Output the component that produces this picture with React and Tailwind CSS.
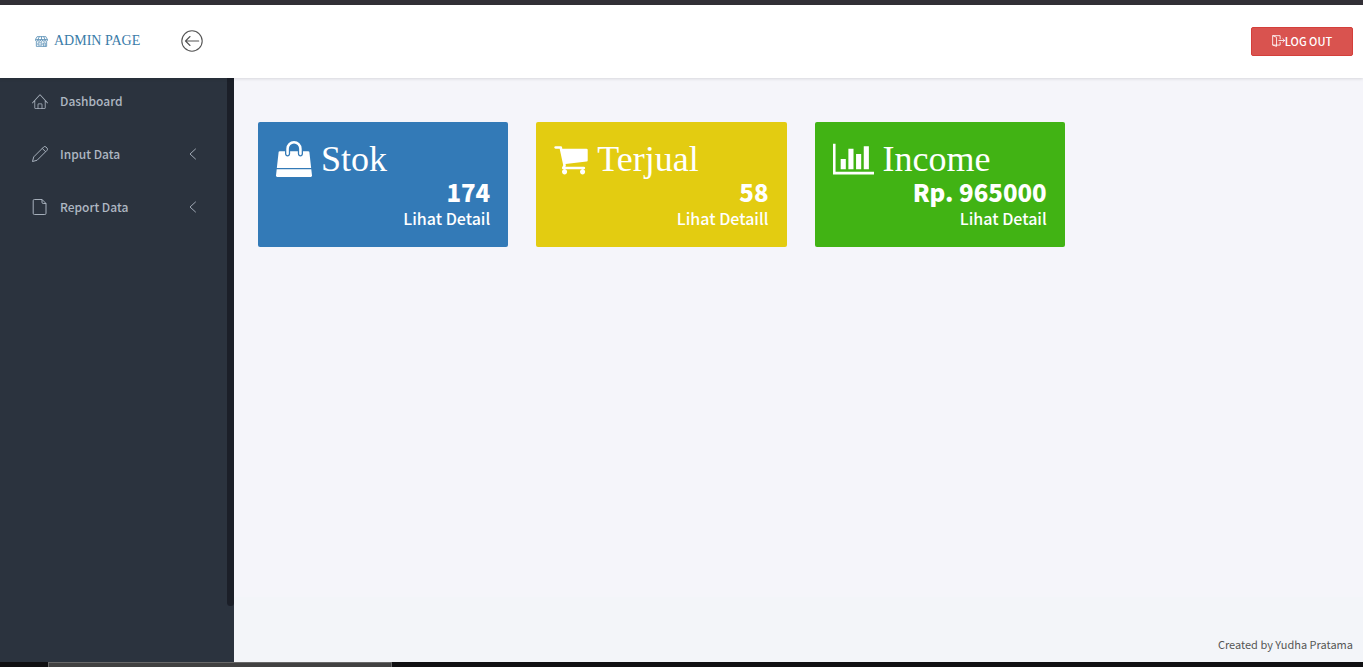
import React from "react";

function HomeIcon() {
  return (
    <svg viewBox="0 0 20 20" fill="currentColor" className="size-4" aria-hidden="true">
      <path d="M19.871 12.165l-8.829-9.758c-0.274-0.303-0.644-0.47-1.042-0.47-0.397 0-0.767 0.167-1.042 0.47l-8.829 9.758c-0.185 0.205-0.169 0.521 0.035 0.706 0.096 0.087 0.216 0.129 0.335 0.129 0.136 0 0.272-0.055 0.371-0.165l2.129-2.353v8.018c0 0.827 0.673 1.5 1.5 1.5h11c0.827 0 1.5-0.673 1.5-1.5v-8.018l2.129 2.353c0.185 0.205 0.501 0.221 0.706 0.035s0.221-0.501 0.035-0.706zM12 19h-4v-4.5c0-0.276 0.224-0.5 0.5-0.5h3c0.276 0 0.5 0.224 0.5 0.5v4.5zM16 18.5c0 0.276-0.224 0.5-0.5 0.5h-2.5v-4.5c0-0.827-0.673-1.5-1.5-1.5h-3c-0.827 0-1.5 0.673-1.5 1.5v4.5h-2.5c-0.276 0-0.5-0.224-0.5-0.5v-9.123l5.7-6.3c0.082-0.091 0.189-0.141 0.3-0.141s0.218 0.05 0.3 0.141l5.7 6.3v9.123z" />
    </svg>
  );
}

function PencilIcon() {
  return (
    <svg viewBox="0 0 20 20" fill="none" stroke="currentColor" strokeWidth="1.200" strokeLinejoin="round" className="size-4" aria-hidden="true">
      <path d="M.6 19.400 2.200 13.600 14.600 1.200a2 2 0 0 1 2.800 0l1.400 1.400a2 2 0 0 1 0 2.800L6.400 17.800zM12.800 3l4.200 4.200" />
    </svg>
  );
}

function FileIcon() {
  return (
    <svg viewBox="0 0 20 20" fill="none" stroke="currentColor" strokeWidth="1.200" strokeLinejoin="round" className="size-4" aria-hidden="true">
      <path d="M3 .6h9.500l5 5v12.300a1.500 1.500 0 0 1-1.500 1.500h-13a1.500 1.500 0 0 1-1.500-1.500V2.100a1.500 1.500 0 0 1 1.500-1.500zM12.500 .6V4.100a1.500 1.500 0 0 0 1.500 1.500h3.500" />
    </svg>
  );
}

function ChevronIcon() {
  return (
    <svg viewBox="0 0 12 12" fill="none" stroke="currentColor" strokeLinecap="round" strokeLinejoin="round" strokeWidth=".9" className="size-3" aria-hidden="true">
      <path d="M8.500 1 3 6l5.500 5" />
    </svg>
  );
}

function StoreIcon() {
  return (
    <svg viewBox="0 0 24 20" fill="none" stroke="currentColor" strokeWidth="1.300" strokeLinejoin="round" className="h-[11px] w-[13px]" aria-hidden="true">
      <path d="M4 1h16l3 5.500v1.500c0 2.200-4.400 2.200-4.400 0 0 2.200-4.400 2.200-4.400 0 0 2.200-4.400 2.200-4.400 0 0 2.200-4.400 2.200-4.400 0 0 2.200-4.400 2.200-4.400 0l-.4-1.500zM1 6.500h22M8 1 5.400 6.500V8M12 1v5.500M16 1l2.600 5.500V8M9.800 6.500V8M14.200 6.500V8M2.500 10.500v8.500h19v-8.500M5.500 12.500h7.500v4h-7.500zM16 19v-6.500h3V19" />
    </svg>
  );
}

function ArrowCircleIcon() {
  return (
    <svg viewBox="0 0 22 22" fill="none" stroke="currentColor" strokeWidth="1.100" strokeLinecap="round" strokeLinejoin="round" className="size-[22px]" aria-hidden="true">
      <circle cx="11" cy="11" r="10.200" />
      <path d="M17.700 11H4.500M9 6.500 4.500 11 9 15.500" />
    </svg>
  );
}

function ExitIcon() {
  return (
    <svg viewBox="0 0 20 18" fill="none" stroke="currentColor" strokeWidth="1.300" strokeLinecap="round" strokeLinejoin="round" className="h-3 w-[13px]" aria-hidden="true">
      <path d="M12.500 5.500V.8H1v14.500h5M12.500 11v4.300H7M1.500 .8 7 3.300v14l-5.500-2M10.500 8.200h9M16.700 5.400l2.800 2.800-2.800 2.800" />
    </svg>
  );
}

function BagIcon() {
  return (
    <svg viewBox="0 0 1792 1792" fill="currentColor" className="size-9" aria-hidden="true">
      <path d="M1757 1408l35 313q3 28-16 50-19 21-48 21h-1664q-29 0-48-21-19-22-16-50l35-313h1722zm-93-839l86 775h-1708l86-775q3-24 21-40.5t43-16.5h256v128q0 53 37.500 90.500t90.500 37.500 90.500-37.500 37.500-90.500v-128h384v128q0 53 37.500 90.500t90.500 37.500 90.500-37.500 37.500-90.500v-128h256q25 0 43 16.500t21 40.500zm-384-185v256q0 26-19 45t-45 19-45-19-19-45v-256q0-106-75-181t-181-75-181 75-75 181v256q0 26-19 45t-45 19-45-19-19-45v-256q0-159 112.500-271.500t271.500-112.500 271.500 112.500 112.500 271.500z" />
    </svg>
  );
}

function CartIcon() {
  return (
    <svg viewBox="64 0 1664 1792" fill="currentColor" className="h-9 w-[34px]" aria-hidden="true">
      <path d="M704 1536q0 52-38 90t-90 38-90-38-38-90 38-90 90-38 90 38 38 90zm896 0q0 52-38 90t-90 38-90-38-38-90 38-90 90-38 90 38 38 90zm128-1088v512q0 24-16.500 42.500t-40.500 21.500l-1044 122q13 60 13 70 0 16-24 64h920q26 0 45 19t19 45-19 45-45 19h-1024q-26 0-45-19t-19-45q0-11 8-31.500t16-36 21.500-40 15.500-29.500l-177-823h-204q-26 0-45-19t-19-45 19-45 45-19h256q16 0 28.500 6.500t19.500 15.500 13 24.500 8 26 5.500 29.500 4.500 26h1201q26 0 45 19t19 45z" />
    </svg>
  );
}

function ChartIcon() {
  return (
    <svg viewBox="0 0 2048 1792" fill="currentColor" className="h-9 w-[41px]" aria-hidden="true">
      <path d="M640 896v512h-256v-512h256zm384-512v1024h-256v-1024h256zm1024 1152v128h-2048v-1536h128v1408h1920zm-640-896v768h-256v-768h256zm384-384v1152h-256v-1152h256z" />
    </svg>
  );
}

const navItems = [
  { label: "Dashboard", Icon: HomeIcon, expandable: false },
  { label: "Input Data", Icon: PencilIcon, expandable: true },
  { label: "Report Data", Icon: FileIcon, expandable: true },
];

const cards = [
  { title: "Stok", value: "174", link: "Lihat Detail", Icon: BagIcon, color: "bg-[#337ab7]" },
  { title: "Terjual", value: "58", link: "Lihat Detaill", Icon: CartIcon, color: "bg-[#e3cc11]" },
  { title: "Income", value: "Rp. 965000", link: "Lihat Detail", Icon: ChartIcon, color: "bg-[#41b314]" },
];

export default function App() {
  return (
    <div className="flex min-h-screen flex-col bg-[#f5f5fa] font-['Noto_Sans_CJK_JP','Noto_Sans',sans-serif]">
      <div className="h-[5px] bg-[#323036]" />
      <header className="z-10 flex h-[73px] items-center justify-between bg-white pr-[10px] pl-[35px] shadow-[0_1px_3px_rgba(0,0,0,0.12)]">
        <div className="flex items-center gap-[41px] pb-px">
          <a href="#" className="flex items-center gap-[6px] font-['Liberation_Serif',serif] text-sm text-[#3a7ba8]">
            <StoreIcon />
            ADMIN PAGE
          </a>
          <button type="button" aria-label="Toggle sidebar" className="text-[#555]">
            <ArrowCircleIcon />
          </button>
        </div>
        <button type="button" className="flex h-[29px] w-[102px] items-center justify-center rounded-xs border border-[#d43f3a] bg-[#d9534f] pb-px text-[11px] font-medium text-white">
          <ExitIcon />
          LOG OUT
        </button>
      </header>

      <div className="flex grow">
        <aside className="flex w-[234px] shrink-0 bg-[#2b333e]">
          <nav className="grow">
            <ul className="flex flex-col gap-[7px]">
              {navItems.map(({ label, Icon, expandable }) => (
                <li key={label}>
                  <a href="#" className="flex h-[46px] items-center gap-3 pr-7 pl-8 text-xs font-medium text-[#aeb7c2]">
                    <Icon />
                    <span className="grow">{label}</span>
                    {expandable && <ChevronIcon />}
                  </a>
                </li>
              ))}
            </ul>
          </nav>
          <div className="mb-14 w-[7px] rounded-b-sm bg-[#1b1f28]" />
        </aside>

        <div className="flex grow flex-col">
          <main className="grid grow grid-cols-4 content-start gap-7 pt-11 pr-5 pl-6">
            {cards.map(({ title, value, link, Icon, color }) => (
              <section key={title} className={`${color} h-[125px] rounded-xs px-[18px] pt-[17px] text-white`}>
                <h2 className="flex h-10 items-center gap-[9px] font-['Liberation_Serif',serif] text-4xl leading-10">
                  <Icon />
                  {title}
                </h2>
                <p className="text-right text-2xl leading-[26px] font-black">{value}</p>
                <a href="#" className="block text-right text-base leading-[26px] font-medium">{link}</a>
              </section>
            ))}
          </main>
          <footer className="bg-[#f3f5f9] pt-[38px] pr-[10px] pb-[9px] text-right text-[11px] leading-[18px] text-[#555]">
            Created by Yudha Pratama
          </footer>
        </div>
      </div>

      <div className="flex h-[5px] bg-[#101012] pl-12">
        <div className="w-[344px] border-x border-t border-[#686868] bg-[#414141]" />
      </div>
    </div>
  );
}
